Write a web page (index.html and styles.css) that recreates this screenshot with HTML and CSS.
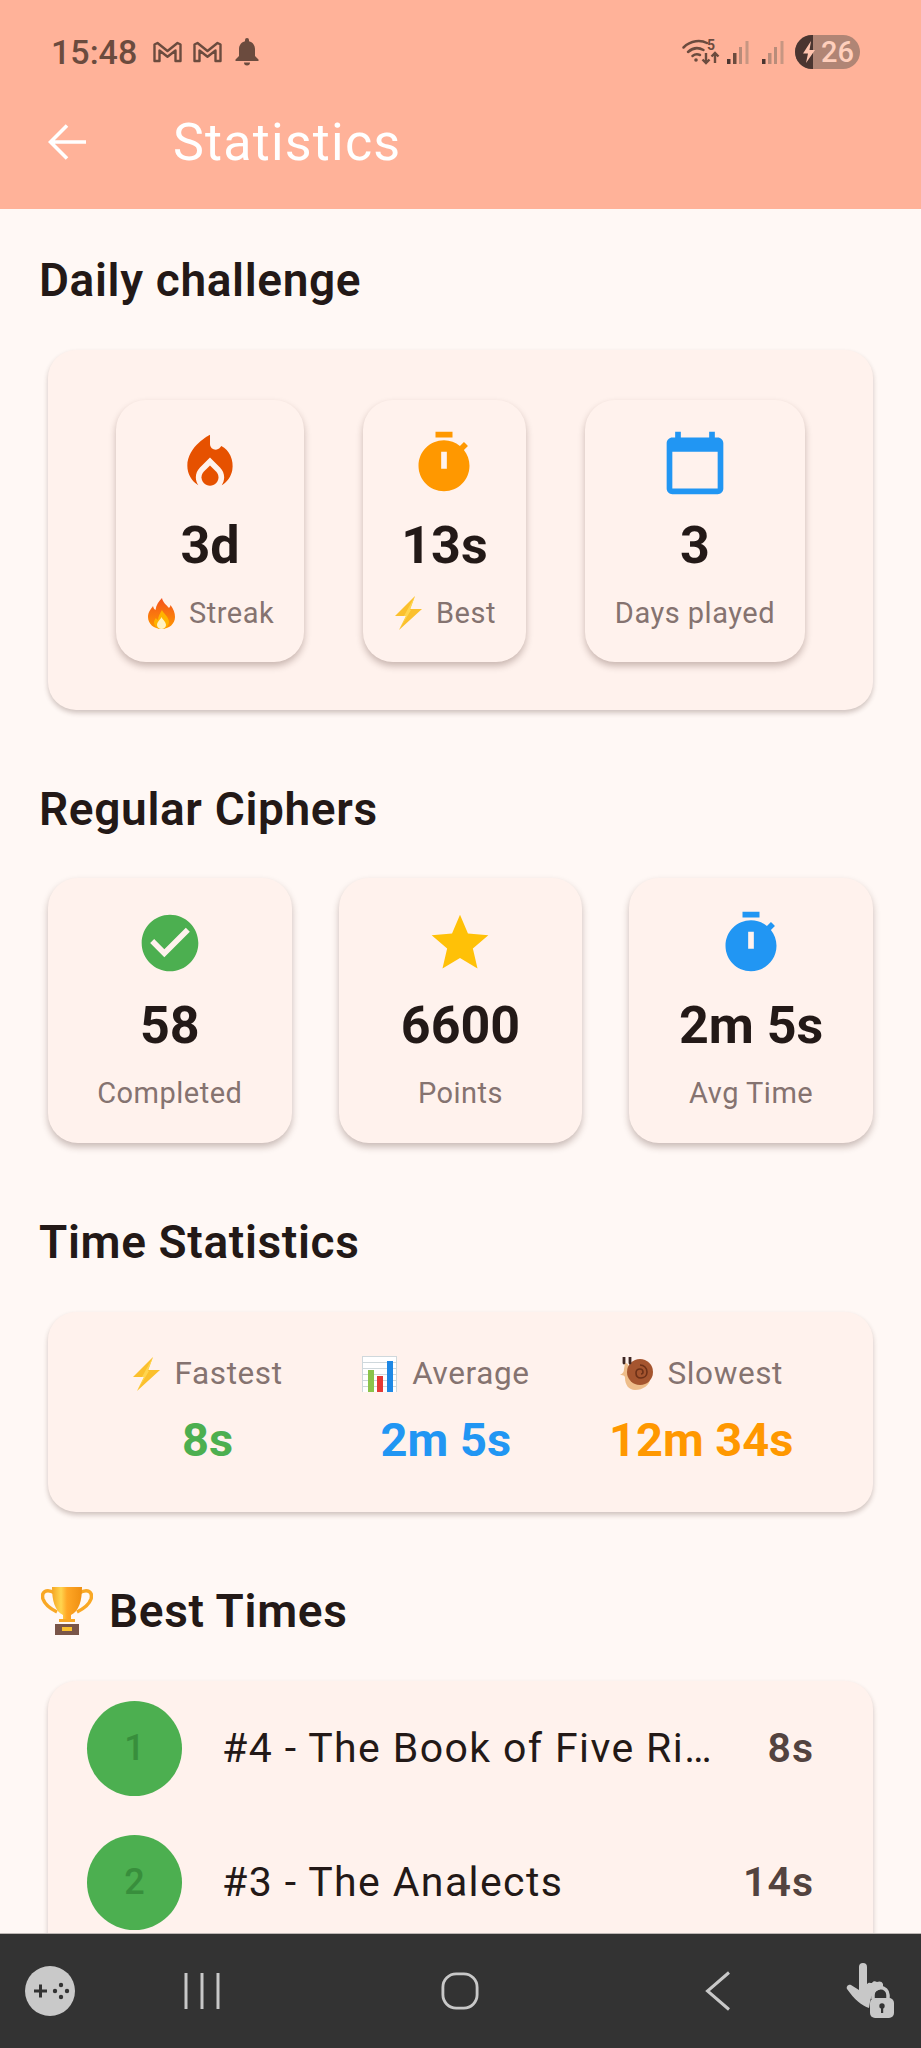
FILE: index.html
```html
<!DOCTYPE html>
<html lang="en">
<head>
<meta charset="utf-8">
<title>Statistics</title>
<link rel="stylesheet" href="styles.css">
</head>
<body>
<div class="phone">
  <header class="appbar">
    <div class="status">
      <span class="clock">15:48</span>
      <svg class="gmail" viewBox="0 0 30 22"><path d="M2 20V3.500L5 2l10 8 10-8 3 1.500V20h-5V9.500l-8 6.200-8-6.200V20z" fill="none" stroke="#6b4b3e" stroke-width="2.400" stroke-linejoin="round"/></svg>
      <svg class="gmail" viewBox="0 0 30 22"><path d="M2 20V3.500L5 2l10 8 10-8 3 1.500V20h-5V9.500l-8 6.200-8-6.200V20z" fill="none" stroke="#6b4b3e" stroke-width="2.400" stroke-linejoin="round"/></svg>
      <svg class="bell" viewBox="0 0 24 28"><path d="M12 0a2 2 0 0 1 2 2v1.200c3.600.9 6 4 6 7.800v7l3.500 3.500V23H.5v-1.500L4 18v-7c0-3.800 2.400-6.900 6-7.800V2a2 2 0 0 1 2-2zM9 24.500h6a3 3 0 0 1-6 0z" fill="#6b4b3e"/></svg>
      <span class="status-gap"></span>
      <svg class="wifi" viewBox="0 0 38 26">
        <g fill="none" stroke="#6b4b3e" stroke-width="2.500" stroke-linecap="round"><path d="M1.500 8.500C9 1 19 1 25 4"/><path d="M6 13c5-4.500 11-4.500 15.500-2"/><path d="M10.500 17c2.500-2 5-2 7.500-1"/></g>
        <circle cx="14" cy="21" r="1.800" fill="#6b4b3e"/>
        <path d="M24 14v10m-3.500-3.500L24 24l3.500-3.500M33 24V14m-3.500 3.500L33 14l3.500 3.500" fill="none" stroke="#6b4b3e" stroke-width="2.400"/>
        <text x="25" y="11" class="wifi-five">5</text>
      </svg>
      <svg class="signal" viewBox="0 0 22 23"><rect x="0" y="18" width="3.500" height="5" fill="#4a3530"/><rect x="6" y="12" width="3.500" height="11" fill="#6b4b3e"/><rect x="12" y="6" width="3" height="17" fill="#b98c7a"/><rect x="18.500" y="0" width="3" height="23" fill="#c79682"/></svg>
      <svg class="signal signal-two" viewBox="0 0 22 23"><rect x="0" y="18" width="3.500" height="5" fill="#4a3530"/><rect x="6" y="12" width="3.500" height="11" fill="#b98c7a"/><rect x="12" y="6" width="3" height="17" fill="#b98c7a"/><rect x="18.500" y="0" width="3" height="23" fill="#c79682"/></svg>
      <div class="battery">
        <span class="battery-cap"><svg class="battery-bolt" viewBox="0 0 14 22"><path d="M9 0L1 12.500h5L4 22l9-13H7.500z" fill="#ffc4ae"/></svg></span>
        <span class="battery-level">26</span>
      </div>
    </div>
    <div class="titlebar">
      <svg class="back" viewBox="0 0 40 38"><path d="M38 19H3M19 2.500L2.500 19 19 35.500" fill="none" stroke="#fff" stroke-width="3.600"/></svg>
      <h1 class="title">Statistics</h1>
    </div>
  </header>

  <main class="content">
    <h2 class="heading heading-first">Daily challenge</h2>
    <section class="card daily">
      <div class="tile">
        <svg class="icon" viewBox="0 0 24 24"><path fill="#e65100" d="M12 12.900l-2.130 2.090C9.310 15.550 9 16.280 9 17.060 9 18.680 10.350 20 12 20s3-1.320 3-2.940c0-.78-.31-1.520-.87-2.070L12 12.900z"/><path fill="#e65100" d="M16 6l-.44.55C14.380 8.020 12 7.190 12 5.300V2S4 6 4 13c0 2.920 1.560 5.470 3.890 6.860-.56-.79-.89-1.760-.89-2.800 0-1.320.52-2.560 1.470-3.500L12 10.100l3.530 3.470c.95.930 1.470 2.170 1.470 3.500 0 1.020-.31 1.960-.85 2.750 1.890-1.150 3.290-3.060 3.710-5.300.66-3.460-1.030-7.190-3.860-8.520z"/></svg>
        <div class="value">3d</div>
        <div class="label">
          <svg class="emoji emoji-fire" viewBox="0 0 27 31"><defs><linearGradient id="fireA" x1="0" y1="0" x2="0" y2="1"><stop offset="0" stop-color="#f4511e"/><stop offset="1" stop-color="#ff9800"/></linearGradient></defs><path d="M14 0c1 5 4 6 7 10 1-1 1.500-2 1.500-3 3 4 4.500 8 4.500 12 0 7-6 12-13.500 12S0 26 0 19C0 14 3 11 5 8c.5 2 1 3 2.500 4C8 7 11 3 14 0z" fill="url(#fireA)"/><path d="M14 12c1 3 7 7 7 12 0 3.500-3.500 7-7.500 7S6 28 6 24.500c0-2 1-3.500 2-4.500 .5 1 1 1.500 2 2 0-3 2-7 4-10z" fill="#ffb300"/><path d="M13.500 19c1 2.500 4.500 5 4.500 8 0 2.300-2 4-4.500 4S9 29.300 9 27c0-3 3.500-5.500 4.500-8z" fill="#fff3c4"/></svg>
          <span>Streak</span>
        </div>
      </div>
      <div class="tile">
        <svg class="icon" viewBox="0 0 24 24"><path fill="#ff9800" d="M9 1h6v2H9zm10.030 6.390l1.420-1.420c-.43-.51-.9-.99-1.410-1.410l-1.420 1.420C16.070 4.740 14.120 4 12 4c-4.970 0-9 4.030-9 9s4.020 9 9 9 9-4.030 9-9c0-2.120-.74-4.070-1.970-5.610zM13 14h-2V8h2v6z"/></svg>
        <div class="value">13s</div>
        <div class="label">
          <svg class="emoji emoji-bolt" viewBox="0 0 27 34"><path d="M20 0L0 20h11L4 34l23-21H15z" fill="#fbc02d"/><path d="M20 0L9 20h2L4 34l12-20h-1z" fill="#ffd54f"/></svg>
          <span>Best</span>
        </div>
      </div>
      <div class="tile">
        <svg class="icon" viewBox="0 0 24 24"><path fill="#2196f3" d="M20 3h-1V1h-2v2H7V1H5v2H4c-1.100 0-2 .9-2 2v16c0 1.100.9 2 2 2h16c1.100 0 2-.9 2-2V5c0-1.100-.9-2-2-2zm0 18H4V8h16v13z"/></svg>
        <div class="value">3</div>
        <div class="label"><span>Days played</span></div>
      </div>
    </section>

    <h2 class="heading">Regular Ciphers</h2>
    <section class="ciphers">
      <div class="tile tile-wide">
        <svg class="icon" viewBox="0 0 24 24"><path fill="#4caf50" d="M12 2C6.480 2 2 6.480 2 12s4.480 10 10 10 10-4.480 10-10S17.520 2 12 2zm-2 15l-5-5 1.410-1.410L10 14.170l7.590-7.590L19 8l-9 9z"/></svg>
        <div class="value">58</div>
        <div class="label"><span>Completed</span></div>
      </div>
      <div class="tile tile-wide">
        <svg class="icon" viewBox="0 0 24 24"><path fill="#ffc107" d="M12 17.270L18.180 21l-1.640-7.030L22 9.240l-7.190-.61L12 2 9.190 8.630 2 9.240l5.460 4.730L5.820 21z"/></svg>
        <div class="value">6600</div>
        <div class="label"><span>Points</span></div>
      </div>
      <div class="tile tile-wide">
        <svg class="icon" viewBox="0 0 24 24"><path fill="#2196f3" d="M9 1h6v2H9zm10.030 6.390l1.420-1.420c-.43-.51-.9-.99-1.410-1.410l-1.420 1.420C16.070 4.740 14.120 4 12 4c-4.970 0-9 4.030-9 9s4.020 9 9 9 9-4.030 9-9c0-2.120-.74-4.070-1.970-5.610zM13 14h-2V8h2v6z"/></svg>
        <div class="value">2m 5s</div>
        <div class="label"><span>Avg Time</span></div>
      </div>
    </section>

    <h2 class="heading">Time Statistics</h2>
    <section class="card times">
      <div class="time">
        <div class="label">
          <svg class="emoji emoji-bolt" viewBox="0 0 27 34"><path d="M20 0L0 20h11L4 34l23-21H15z" fill="#fbc02d"/><path d="M20 0L9 20h2L4 34l12-20h-1z" fill="#ffd54f"/></svg>
          <span>Fastest</span>
        </div>
        <div class="time-value fast">8s</div>
      </div>
      <div class="time">
        <div class="label">
          <svg class="emoji emoji-chart" viewBox="0 0 35 36"><rect width="35" height="36" fill="#fff"/><path d="M0 .5h35M0 6.500h35M0 12.500h35M0 18.500h35M0 24.500h35M0 30.500h35M.5 0v36M34.500 0v36" stroke="#cfd8dc" stroke-width="1"/><rect x="6" y="14" width="6" height="22" fill="#8bc34a"/><rect x="15" y="20" width="6" height="16" fill="#e53935"/><rect x="25" y="5" width="6" height="31" fill="#1e88e5"/></svg>
          <span>Average</span>
        </div>
        <div class="time-value avg">2m 5s</div>
      </div>
      <div class="time">
        <div class="label">
          <svg class="emoji emoji-snail" viewBox="0 0 33 34"><path d="M5 6c3 0 4 3 4 6 0 4 2 6 7 9 5 2 10 2 14 1 0 6-7 11-15 11C9 33 5 28 5 21c0-2-1-3-5-3 3-2 4-3 4-6z" fill="#eebd8a"/><circle cx="20" cy="15" r="13" fill="#a5552f"/><path d="M20 8c4 0 7 3 7 7s-3 6-6 6-5-2-5-5 2-4 4-4 3 1 3 3-1 2-2 2" fill="none" stroke="#6d3118" stroke-width="1.600"/><path d="M4 0v6M10 0v6" stroke="#3e2723" stroke-width="2.800" stroke-linecap="round"/></svg>
          <span>Slowest</span>
        </div>
        <div class="time-value slow">12m 34s</div>
      </div>
    </section>

    <h2 class="heading heading-trophy">
      <svg class="trophy" viewBox="0 0 52 50"><defs><linearGradient id="cup" x1="0" y1="0" x2="1" y2="0"><stop offset="0" stop-color="#f5a623"/><stop offset=".3" stop-color="#ffd54f"/><stop offset=".5" stop-color="#ffa726"/><stop offset="1" stop-color="#ef8f11"/></linearGradient></defs><path d="M14 7C5 2 0 6 2 13c2 6 8 10 14 13M38 7c9-5 14-1 12 6-2 6-8 10-14 13" fill="none" stroke="#f9a825" stroke-width="3.500"/><path d="M11 1h30c0 14-3 24-11 28v6h-8v-6C14 25 11 15 11 1z" fill="url(#cup)"/><rect x="18" y="33" width="16" height="3" fill="#f9a825"/><rect x="14" y="38" width="24" height="11" fill="#795548"/><rect x="21" y="41" width="10" height="4" fill="#fbc02d"/></svg>
      <span>Best Times</span>
    </h2>
    <section class="card list">
      <div class="row">
        <div class="rank">1</div>
        <div class="row-title">#4 - The Book of Five Rings</div>
        <div class="row-time">8s</div>
      </div>
      <div class="row">
        <div class="rank">2</div>
        <div class="row-title">#3 - The Analects</div>
        <div class="row-time">14s</div>
      </div>
    </section>
  </main>

  <nav class="navbar">
    <svg class="nav-game" viewBox="0 0 50 50"><circle cx="25" cy="25" r="25" fill="#c9c9c9"/><path d="M9 25h13M15.500 18.500v13" stroke="#333" stroke-width="3"/><circle cx="36" cy="19" r="2.200" fill="#333"/><circle cx="36" cy="31" r="2.200" fill="#333"/><circle cx="30" cy="25" r="2.200" fill="#333"/><circle cx="42" cy="25" r="2.200" fill="#333"/></svg>
    <svg class="nav-recent" viewBox="0 0 36 36"><path d="M2 0v36M18 0v36M34 0v36" stroke="#c8c8c8" stroke-width="3"/></svg>
    <svg class="nav-home" viewBox="0 0 40 40"><rect x="2" y="2" width="36" height="36" rx="14" fill="none" stroke="#c8c8c8" stroke-width="3"/></svg>
    <svg class="nav-back" viewBox="0 0 26 40"><path d="M24 1.500L2.500 20 24 38.500" fill="none" stroke="#c8c8c8" stroke-width="3"/></svg>
    <svg class="nav-touch" viewBox="0 0 50 56"><path d="M13 4a4 4 0 0 1 8 0v17c2-2 3-1 5-1 1-2 3-2 5-1 2-1 5-1 6 2v5c-6 0-12 5-13 13l-1 6C16 43 8 36 1 26c-1-2 1-5 4-4l8 5z" fill="#c8c8c8"/><path d="M27 36v-4a7.500 7.500 0 0 1 15 0v4" fill="none" stroke="#c8c8c8" stroke-width="3.500"/><rect x="24" y="35" width="24" height="20" rx="5" fill="#c8c8c8"/><circle cx="36" cy="43" r="2.700" fill="#333"/><rect x="35" y="44" width="2.200" height="6" fill="#333"/></svg>
  </nav>
</div>
</body>
</html>
```

FILE: styles.css
```css
* { box-sizing: border-box; }
html, body { margin: 0; padding: 0; }
body { font-family: Roboto, "Noto Sans", sans-serif; background: #fff8f5; color: #231917; }
.phone { width: 921px; height: 2048px; display: flex; flex-direction: column; overflow: hidden; }

.appbar { height: 209px; flex: none; background: #ffb299; }
.status { height: 104px; display: flex; align-items: center; padding: 0 61px 0 51px; }
.clock { font-size: 34px; font-weight: 500; color: #6b4b3e; width: 101px; }
.gmail { width: 31px; height: 22px; margin-right: 9px; }
.bell { width: 24px; height: 28px; margin-left: 3px; }
.status-gap { flex: 1; }
.wifi { width: 38px; height: 26px; margin-right: 7px; overflow: visible; }
.wifi-five { font-size: 14px; font-weight: 700; fill: #6b4b3e; font-family: Roboto, sans-serif; }
.signal { width: 22px; height: 23px; margin-right: 13px; }
.signal-two { margin-right: 11px; }
.battery { width: 65px; height: 34px; border-radius: 17px; overflow: hidden; display: flex; background: #b08575; }
.battery-cap { width: 18px; background: #4a3530; display: flex; align-items: center; justify-content: flex-end; }
.battery-bolt { width: 14px; height: 22px; margin-right: -3px; }
.battery-level { font-size: 29px; font-weight: 500; color: #ffcfbc; line-height: 34px; margin-left: 8px; }

.titlebar { height: 76px; display: flex; align-items: center; padding-left: 48px; }
.back { width: 40px; height: 38px; }
.title { margin: 0 0 0 85px; font-size: 52px; font-weight: 400; color: #fff; letter-spacing: 1.200px; }

.content { flex: 1; min-height: 0; overflow: hidden; padding: 0 48px; }
.heading { margin: 74px 0 45px -9px; font-size: 46px; font-weight: 600; line-height: 50px; letter-spacing: .65px; color: #231917; }
.heading-first { margin-top: 46px; }
.heading-trophy { display: flex; align-items: center; gap: 16px; margin-left: -7px; }
.trophy { width: 52px; height: 50px; }

.card { background: #fff2ed; border-radius: 28px; box-shadow: 0 3px 5px rgba(60, 30, 20, .24); }
.daily { height: 360px; padding: 50px 68px 0; display: flex; justify-content: space-between; align-items: flex-start; }

.tile { background: #fff2ed; border-radius: 30px; box-shadow: 0 4px 7px rgba(60, 30, 20, .28); padding: 29px 30px; display: flex; flex-direction: column; align-items: center; }
.tile-wide { padding: 31px 8px 30px; }
.icon { width: 68px; height: 68px; display: block; }
.value { margin-top: 19px; font-size: 52px; font-weight: 700; line-height: 60px; color: #231917; }
.label { display: flex; align-items: center; gap: 14px; margin-top: 17px; font-size: 29px; line-height: 40px; letter-spacing: .5px; color: #857370; white-space: nowrap; }
.emoji { display: block; flex: none; }
.daily .emoji { margin-left: 2px; }
.emoji-fire { width: 27px; height: 31px; }
.emoji-bolt { width: 27px; height: 34px; }
.emoji-chart { width: 35px; height: 36px; }
.emoji-snail { width: 33px; height: 34px; }

.ciphers { display: grid; grid-template-columns: repeat(3, 1fr); gap: 47px; margin-top: -1px; }

.times { height: 200px; padding: 42px 0 0 5px; display: flex; justify-content: space-evenly; align-items: flex-start; }
.time { display: flex; flex-direction: column; align-items: center; }
.time .label { margin-top: 0; font-size: 31.500px; letter-spacing: .6px; gap: 15px; }
.time-value { margin-top: 21px; font-size: 47px; font-weight: 700; line-height: 50px; }
.fast { color: #4caf50; }
.avg { color: #2196f3; }
.slow { color: #ff9800; }

.list { height: 400px; }
.row { height: 134px; display: flex; align-items: center; padding: 0 59px 0 39px; gap: 38px; }
.rank { width: 95px; height: 95px; flex: none; margin-right: 2px; border-radius: 50%; background: #4caf50; color: #388e3c; font-size: 36px; font-weight: 500; display: flex; align-items: center; justify-content: center; }
.row-title { flex: 1; min-width: 0; font-size: 41px; letter-spacing: 1.400px; color: #231917; white-space: nowrap; overflow: hidden; text-overflow: ellipsis; }
.row-time { flex: none; font-size: 41px; font-weight: 600; letter-spacing: 1px; color: #53433f; }

.navbar { height: 115px; flex: none; background: #333; border-top: 1px solid #bdb7b4; display: flex; align-items: center; padding-left: 25px; }
.nav-game { width: 50px; height: 50px; }
.nav-recent { width: 36px; height: 36px; margin-left: 109px; }
.nav-home { width: 38px; height: 38px; margin-left: 221px; }
.nav-back { width: 26px; height: 40px; margin-left: 226px; }
.nav-touch { width: 50px; height: 56px; margin-left: 115px; }
```
